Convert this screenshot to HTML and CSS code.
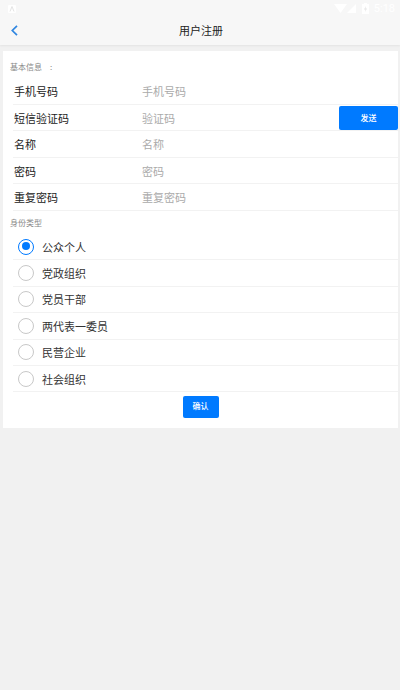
FILE: index.html
```html
<!DOCTYPE html>
<html lang="zh-CN">
<head>
    <meta charset="UTF-8">
    <title>用户注册</title>
    <link rel="stylesheet" href="styles.css">
</head>
<body>
    <header class="app-header">
        <div class="status-bar">
            <svg class="status-notice" width="8" height="8" viewBox="0 0 8 8"><rect width="8" height="8" rx="1" fill="#fff"/><path d="M2 6.5L4 1.5L6 6.5" fill="none" stroke="#e4e4e4" stroke-width="1"/></svg>
            <svg class="status-wifi" width="13" height="9" viewBox="0 0 13 9"><path d="M0 0H13L6.5 9Z" fill="#fff"/></svg>
            <svg class="status-signal" width="9" height="9" viewBox="0 0 9 9"><path d="M9 0V9H0Z" fill="#fff"/></svg>
            <svg class="status-battery" width="7" height="11" viewBox="0 0 7 11"><path d="M2 0H5V1H7V11H0V1H2Z" fill="#fff"/><path d="M4 3L2 6.5H3.5L3 9L5 5.5H3.5Z" fill="#e4e4e4"/></svg>
            <span class="status-time">5:18</span>
        </div>
        <div class="title-bar">
            <svg class="back-icon" width="7" height="11" viewBox="0 0 7 11"><path d="M6 0.8L1.3 5.5L6 10.2" fill="none" stroke="#2f86e0" stroke-width="1.7"/></svg>
            <h1>用户注册</h1>
        </div>
    </header>

    <main class="card">
        <div class="section-title first">基本信息　:</div>
        <div class="form-row"><label>手机号码</label><span class="hint">手机号码</span></div>
        <div class="form-row">
            <label>短信验证码</label><span class="hint">验证码</span>
            <button class="btn-send">发送</button>
        </div>
        <div class="form-row"><label>名称</label><span class="hint">名称</span></div>
        <div class="form-row"><label>密码</label><span class="hint">密码</span></div>
        <div class="form-row"><label>重复密码</label><span class="hint">重复密码</span></div>

        <div class="section-title">身份类型</div>
        <div class="radio-row"><span class="radio checked"></span>公众个人</div>
        <div class="radio-row"><span class="radio"></span>党政组织</div>
        <div class="radio-row"><span class="radio"></span>党员干部</div>
        <div class="radio-row"><span class="radio"></span>两代表一委员</div>
        <div class="radio-row"><span class="radio"></span>民营企业</div>
        <div class="radio-row"><span class="radio"></span>社会组织</div>

        <div class="button-group">
            <button class="btn-confirm">确认</button>
        </div>
    </main>
</body>
</html>
```

FILE: styles.css
```css
body {
    margin: 0;
    min-height: 690px;
    background-color: #f1f1f1;
    color: #333;
    font-family: "Noto Sans CJK SC", "Liberation Sans", sans-serif;
}
.app-header {
    height: 45px;
    background-color: #f7f7f7;
    box-shadow: 0 1px 2px rgba(0, 0, 0, 0.06);
}
.status-bar {
    height: 16px;
    display: flex;
    align-items: center;
    padding: 1px 5px 0 8px;
    box-sizing: border-box;
}
.status-notice {
    margin-right: auto;
}
.status-battery {
    margin-left: 6px;
}
.status-time {
    margin-left: 5px;
    color: #fff;
    font-size: 11px;
    font-family: "Roboto", sans-serif;
}
.title-bar {
    height: 27px;
    position: relative;
    display: flex;
    align-items: center;
    justify-content: center;
    padding-left: 2px;
}
.back-icon {
    position: absolute;
    left: 11px;
    top: 8.5px;
}
h1 {
    margin: 0;
    font-size: 11px;
    font-weight: 400;
    color: #222;
}
.card {
    margin: 5.5px 2px 0 3px;
    background-color: #fff;
    height: 377.5px;
    box-sizing: border-box;
}
.section-title {
    padding-left: 7px;
    height: 23.5px;
    line-height: 23px;
    font-size: 8px;
    color: #888;
}
.section-title.first {
    height: 27.5px;
    line-height: 32px;
}
.form-row, .radio-row {
    margin-left: 10px;
    height: 26.4px;
    box-sizing: border-box;
    border-bottom: 1px solid #f2f2f2;
    display: flex;
    align-items: center;
    font-size: 11px;
    color: #222;
}
.form-row {
    position: relative;
    padding-top: 0.6px;
    height: 26.5px;
}
.radio-row {
    color: #333;
}
.form-row label {
    width: 128px;
    padding-left: 1px;
}
.hint {
    color: #aaa;
}
.btn-send {
    position: absolute;
    right: 0;
    top: 1px;
    width: 59px;
    height: 24px;
    border: none;
    border-radius: 2px;
    background-color: #007aff;
    color: #fff;
    font-size: 8px;
    font-weight: 500;
    font-family: inherit;
    padding: 0;
}
.radio {
    width: 16px;
    height: 16px;
    margin: 0 8px 0 5px;
    border: 1px solid #c8c8c8;
    border-radius: 50%;
    box-sizing: border-box;
    flex-shrink: 0;
}
.radio.checked {
    border: 1.5px solid #007aff;
    position: relative;
}
.radio.checked::after {
    content: "";
    position: absolute;
    left: 2.5px;
    top: 2.5px;
    width: 8px;
    height: 8px;
    border-radius: 50%;
    background-color: #007aff;
}
.button-group {
    display: flex;
    justify-content: center;
    padding-top: 3.5px;
}
.btn-confirm {
    width: 36px;
    height: 22px;
    border: none;
    border-radius: 2px;
    background-color: #007aff;
    color: #fff;
    font-size: 8px;
    font-weight: 500;
    font-family: inherit;
    padding: 0 0 2px;
}
```
